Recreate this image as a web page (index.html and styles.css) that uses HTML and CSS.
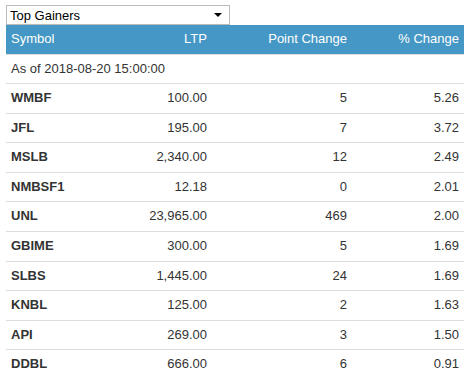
FILE: index.html
```html
<!DOCTYPE html>
<html>
<head>
<meta charset="utf-8">
<link rel="stylesheet" href="styles.css">
</head>
<body>
<div class="wrap">
  <div class="select-box">
    <select class="picker">
      <option>Top Gainers</option>
      <option>Top Losers</option>
    </select>
    <span class="arrow"></span>
  </div>
  <table class="grid">
    <colgroup>
      <col class="c1"><col class="c2"><col class="c3"><col class="c4">
    </colgroup>
    <thead>
      <tr><th class="l">Symbol</th><th>LTP</th><th>Point Change</th><th>% Change</th></tr>
    </thead>
    <tbody>
      <tr><td class="l" colspan="4">As of 2018-08-20 15:00:00</td></tr>
      <tr><td class="sym">WMBF</td><td>100.00</td><td>5</td><td>5.26</td></tr>
      <tr><td class="sym">JFL</td><td>195.00</td><td>7</td><td>3.72</td></tr>
      <tr><td class="sym">MSLB</td><td>2,340.00</td><td>12</td><td>2.49</td></tr>
      <tr><td class="sym">NMBSF1</td><td>12.18</td><td>0</td><td>2.01</td></tr>
      <tr><td class="sym">UNL</td><td>23,965.00</td><td>469</td><td>2.00</td></tr>
      <tr><td class="sym">GBIME</td><td>300.00</td><td>5</td><td>1.69</td></tr>
      <tr><td class="sym">SLBS</td><td>1,445.00</td><td>24</td><td>1.69</td></tr>
      <tr><td class="sym">KNBL</td><td>125.00</td><td>2</td><td>1.63</td></tr>
      <tr><td class="sym">API</td><td>269.00</td><td>3</td><td>1.50</td></tr>
      <tr><td class="sym">DDBL</td><td>666.00</td><td>6</td><td>0.91</td></tr>
    </tbody>
  </table>
</div>
</body>
</html>
```
FILE: styles.css
```css
html, body {
  margin: 0;
  padding: 0;
  background: #fff;
}
body {
  font-family: "Liberation Sans", Arial, sans-serif;
  font-size: 13px;
  color: #333;
}
.wrap {
  padding: 5px 5px 0 6px;
}
.select-box {
  position: relative;
  width: 224px;
}
.picker {
  display: block;
  width: 224px;
  height: 20px;
  margin: 0;
  padding: 0 0 0 3px;
  border: 1px solid #bbb;
  border-radius: 0;
  background: #fff;
  font-family: "Liberation Sans", Arial, sans-serif;
  font-size: 13px;
  color: #000;
  -webkit-appearance: none;
  appearance: none;
  outline: none;
}
.arrow {
  position: absolute;
  right: 8px;
  top: 8px;
  width: 0;
  height: 0;
  border-left: 4px solid transparent;
  border-right: 4px solid transparent;
  border-top: 4px solid #000;
}
.grid {
  width: 100%;
  border-collapse: collapse;
  border-spacing: 0;
  table-layout: fixed;
}
.c1 { width: 100px; }
.c2 { width: 106px; }
.c3 { width: 140px; }
.c4 { width: 112px; }
.grid th, .grid td {
  padding: 5px;
  line-height: 18.57px;
  text-align: right;
  white-space: nowrap;
}
.grid th {
  background: #4597c5;
  color: #fff;
  font-weight: normal;
  border-bottom: 1px solid #ddd;
}
.grid td {
  border-top: 1px solid #ddd;
}
.grid tbody tr:first-child td {
  border-top: 0;
}
.grid .l {
  text-align: left;
}
.grid .sym {
  text-align: left;
  font-weight: bold;
}
```
